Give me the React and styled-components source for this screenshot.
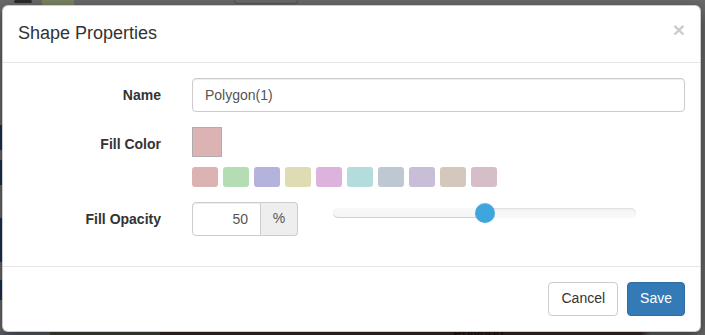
import React from "react";
import styled, { createGlobalStyle } from "styled-components";

const GlobalStyle = createGlobalStyle`
    html, body {
        margin: 0;
        padding: 0;
        background: #6b6b6b;
    }
    body {
        font-family: "Liberation Sans", Arial, Helvetica, sans-serif;
        font-size: 14px;
        line-height: 1.42857;
        color: #333;
    }
    * { box-sizing: border-box; }
`

const swatches = [
    '#dbb3b3', '#b4ddb4', '#b3b3dd', '#dddcb3', '#ddb3dd',
    '#b3dddc', '#bec8d2', '#c8bed8', '#d4c8bc', '#d6bec8'
]

const App = () => {
    const opacity = 50
    return(
        <>
        <GlobalStyle />
        <Backdrop>
            <TopStrip>
                <span className="dots" />
                <span className="green" />
                <span className="btns" />
            </TopStrip>
            <Modal>
                <Header>
                    <Title>Shape Properties</Title>
                    <Close>×</Close>
                </Header>
                <Body>
                    <Row>
                        <Label>Name</Label>
                        <TextInput defaultValue="Polygon(1)" />
                    </Row>
                    <Row>
                        <Label>Fill Color</Label>
                        <div>
                            <ColorBox color={swatches[0]} />
                            <Swatches>
                                {swatches.map(c => (
                                    <Swatch key={c} color={c} />
                                ))}
                            </Swatches>
                        </div>
                    </Row>
                    <Row>
                        <Label>Fill Opacity</Label>
                        <OpacityLine>
                            <InputGroup>
                                <NumberInput defaultValue={opacity} />
                                <Addon>%</Addon>
                            </InputGroup>
                            <Slider>
                                <Selection style={{width: `${opacity}%`}} />
                                <Handle style={{left: `${opacity}%`}} />
                            </Slider>
                        </OpacityLine>
                    </Row>
                </Body>
                <Footer>
                    <Button>Cancel</Button>
                    <Button primary>Save</Button>
                </Footer>
            </Modal>
            <BottomStrip><span>Polygon</span></BottomStrip>
        </Backdrop>
        </>
    )
}

const Backdrop = styled.div`
    width: 705px;
    height: 335px;
    overflow: hidden;
    background: linear-gradient(to bottom, #6b6b6b 0, #6b6b6b 125px, #1d3550 125px, #1d3550 150px, #6b6b6b 150px, #6b6b6b 160px, #1d3550 160px, #1d3550 185px, #6b6b6b 185px, #6b6b6b 218px, #1d3550 218px, #1d3550 262px, #6b6b6b 262px, #6b6b6b 280px, #1d3550 280px, #1d3550 300px, #6b6b6b 300px);
    background-size: 2px 100%;
    background-repeat: no-repeat;
    background-color: #6b6b6b;
    display: flex;
    flex-direction: column;
`

const TopStrip = styled.div`
    height: 5px;
    display: flex;
    align-items: flex-start;
    gap: 10px;
    padding-left: 14px;
    .dots{
        width: 18px;
        height: 3px;
        background: #2c2c2c;
        border-radius: 2px;
    }
    .green{
        width: 32px;
        height: 5px;
        background: #7a8466;
    }
    .btns{
        margin-left: 150px;
        width: 64px;
        height: 4px;
        border: 1px solid #555;
        border-top: none;
        border-radius: 0 0 3px 3px;
    }
`

const Modal = styled.div`
    width: 699px;
    margin-left: 2px;
    background: #fff;
    border: 1px solid rgba(0, 0, 0, 0.2);
    border-radius: 6px;
    box-shadow: 0 5px 15px rgba(0, 0, 0, 0.5);
    position: relative;
    z-index: 1;
`

const Header = styled.div`
    display: flex;
    align-items: flex-start;
    justify-content: space-between;
    padding: 15px;
    border-bottom: 1px solid #e5e5e5;
`

const Title = styled.h4`
    margin: 0;
    font-size: 18px;
    font-weight: normal;
    line-height: 1.42857;
    color: #333;
`

const Close = styled.span`
    font-size: 21px;
    font-weight: bold;
    line-height: 1;
    color: #000;
    opacity: 0.2;
    margin-top: -2px;
`

const Body = styled.div`
    padding: 15px;
`

const Row = styled.div`
    display: grid;
    grid-template-columns: 143px 1fr;
    column-gap: 31px;
    margin-bottom: 15px;
`

const Label = styled.label`
    padding-top: 7px;
    text-align: right;
    font-weight: bold;
    line-height: 20px;
    color: #333;
`

const TextInput = styled.input`
    display: block;
    width: 100%;
    height: 34px;
    padding: 6px 12px;
    font-family: inherit;
    font-size: 14px;
    color: #555;
    background: #fff;
    border: 1px solid #ccc;
    border-radius: 4px;
    box-shadow: inset 0 1px 1px rgba(0, 0, 0, 0.075);
    outline: none;
`

const ColorBox = styled.div`
    width: 30px;
    height: 30px;
    background: ${props => props.color};
    border: 1px solid #adadad;
`

const Swatches = styled.div`
    display: flex;
    gap: 5px;
    margin-top: 10px;
`

const Swatch = styled.div`
    width: 26px;
    height: 20px;
    border-radius: 3px;
    background: ${props => props.color};
`

const OpacityLine = styled.div`
    display: flex;
    align-items: flex-start;
    gap: 35px;
`

const InputGroup = styled.div`
    display: flex;
    width: 106px;
    height: 34px;
`

const NumberInput = styled(TextInput)`
    width: 69px;
    text-align: right;
    border-radius: 4px 0 0 4px;
`

const Addon = styled.span`
    width: 37px;
    display: flex;
    align-items: center;
    justify-content: center;
    background: #eee;
    color: #555;
    border: 1px solid #ccc;
    border-left: none;
    border-radius: 0 4px 4px 0;
`

const Slider = styled.div`
    position: relative;
    width: 303px;
    height: 10px;
    margin-top: 6px;
    border-radius: 5px;
    background: linear-gradient(#f5f5f5, #f9f9f9);
    box-shadow: inset 0 1px 2px rgba(0, 0, 0, 0.1);
`

const Selection = styled.div`
    position: absolute;
    left: 0;
    top: 0;
    height: 100%;
    border-radius: 5px;
    background: linear-gradient(#f9f9f9, #f5f5f5);
    box-shadow: inset 0 -1px 0 rgba(0, 0, 0, 0.15);
`

const Handle = styled.div`
    position: absolute;
    top: -5px;
    width: 20px;
    height: 20px;
    margin-left: -10px;
    border-radius: 50%;
    background: #3ea5dd;
    box-shadow: inset 0 1px 0 rgba(255, 255, 255, 0.2), 0 1px 2px rgba(0, 0, 0, 0.05);
`

const Footer = styled.div`
    display: flex;
    justify-content: flex-end;
    gap: 9px;
    padding: 15px;
    border-top: 1px solid #e5e5e5;
`

const Button = styled.button`
    height: 34px;
    padding: 6px 12px;
    font-family: inherit;
    font-size: 14px;
    line-height: 1.42857;
    border-radius: 4px;
    border: 1px solid ${props => props.primary ? '#2e6da4' : '#ccc'};
    background: ${props => props.primary ? '#337ab7' : '#fff'};
    color: ${props => props.primary ? '#fff' : '#333'};
`

const BottomStrip = styled.div`
    flex: 1;
    background: linear-gradient(to right, #5f636a 0, #5f636a 50px, #4b4a3c 50px, #4b4a3c 160px, #3d2a28 160px, #3d2a28 640px, #6b6b6b 650px);
    position: relative;
    span{
        position: absolute;
        left: 453px;
        top: -8px;
        font-size: 14px;
        color: #1a1010;
    }
`

export default App
